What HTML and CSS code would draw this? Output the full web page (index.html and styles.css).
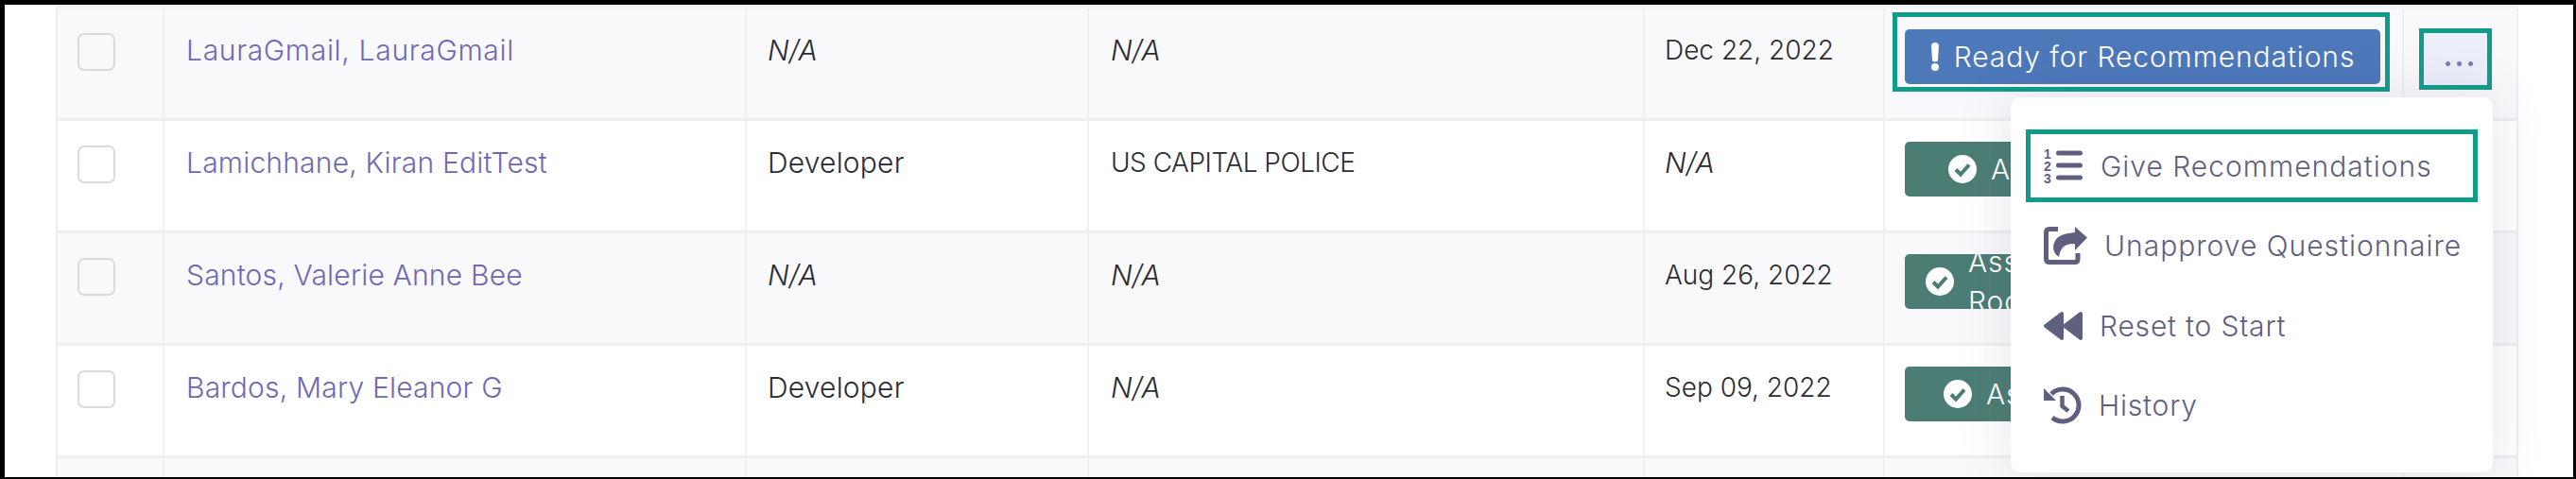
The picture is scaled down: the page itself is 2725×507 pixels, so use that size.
FILE: index.html
```html
<!DOCTYPE html>
<html>
<head lang="en">
    <meta charset="UTF-8">
    <title>Questionnaires</title>
    <link rel="stylesheet" href="styles.css">
</head>
<body>
<div class="frame">
    <div class="table">
        <div class="row">
            <div class="cell"><span class="check"></span></div>
            <div class="cell"><a class="name first">LauraGmail, LauraGmail</a></div>
            <div class="cell"><em class="na">N/A</em></div>
            <div class="cell"><em class="na">N/A</em></div>
            <div class="cell">Dec 22, 2022</div>
            <div class="cell">
                <div class="status ready flagged">
                    <svg class="bang" viewBox="0 0 10 30"><path d="M1 3.500C1 1.500 2.500 0 5 0s4 1.500 4 3.500L8 18.500C7.900 19.800 6.800 20.500 5 20.500s-2.900-.7-3-2z"/><circle cx="5" cy="26" r="4"/></svg>
                    <span>Ready for Recommendations</span>
                </div>
            </div>
            <div class="cell"><div class="more"><i></i><i></i><i></i></div></div>
        </div>
        <div class="row">
            <div class="cell"><span class="check"></span></div>
            <div class="cell"><a class="name">Lamichhane, Kiran EditTest</a></div>
            <div class="cell"><span class="role">Developer</span></div>
            <div class="cell"><span class="org">US CAPITAL POLICE</span></div>
            <div class="cell"><em class="na">N/A</em></div>
            <div class="cell">
                <div class="status done">
                    <svg class="tick" viewBox="0 0 30 30"><circle cx="15" cy="15" r="15" fill="#fff"/><path d="M8 15.500l5 5 9-10" fill="none" stroke="#4c7d74" stroke-width="4"/></svg>
                    <span>Assessment Approved</span>
                </div>
            </div>
            <div class="cell"></div>
        </div>
        <div class="row">
            <div class="cell"><span class="check"></span></div>
            <div class="cell"><a class="name">Santos, Valerie Anne Bee</a></div>
            <div class="cell"><em class="na">N/A</em></div>
            <div class="cell"><em class="na">N/A</em></div>
            <div class="cell">Aug 26, 2022</div>
            <div class="cell">
                <div class="status done two-line">
                    <svg class="tick" viewBox="0 0 30 30"><circle cx="15" cy="15" r="15" fill="#fff"/><path d="M8 15.500l5 5 9-10" fill="none" stroke="#4c7d74" stroke-width="4"/></svg>
                    <span>Assessment Approved,<br>Room Assigned</span>
                </div>
            </div>
            <div class="cell"></div>
        </div>
        <div class="row">
            <div class="cell"><span class="check"></span></div>
            <div class="cell"><a class="name">Bardos, Mary Eleanor G</a></div>
            <div class="cell"><span class="role">Developer</span></div>
            <div class="cell"><em class="na">N/A</em></div>
            <div class="cell">Sep 09, 2022</div>
            <div class="cell">
                <div class="status done shift">
                    <svg class="tick" viewBox="0 0 30 30"><circle cx="15" cy="15" r="15" fill="#fff"/><path d="M8 15.500l5 5 9-10" fill="none" stroke="#4c7d74" stroke-width="4"/></svg>
                    <span>Assessment Approved</span>
                </div>
            </div>
            <div class="cell"></div>
        </div>
        <div class="row">
            <div class="cell"></div><div class="cell"></div><div class="cell"></div><div class="cell"></div>
            <div class="cell"></div><div class="cell"></div><div class="cell"></div>
        </div>
    </div>

    <div class="menu">
        <div class="item current">
            <svg class="ic-list" viewBox="0 0 42 38">
                <text class="digit" x="0" y="11">1</text>
                <text class="digit" x="0" y="24">2</text>
                <text class="digit" x="0" y="37">3</text>
                <rect x="13" y="2.500" width="28" height="5" rx="2.500"/>
                <rect x="13" y="15.500" width="28" height="5" rx="2.500"/>
                <rect x="13" y="28.500" width="28" height="5" rx="2.500"/>
            </svg>
            <span class="lbl-give">Give Recommendations</span>
        </div>
        <div class="item">
            <svg class="ic-share" viewBox="0 0 46 40">
                <path d="M33 0L46 11.500 33 25V18C24 18 18 20 16 32 10 28 9 22 11 17 14 9 22 7 33 6z"/>
                <path class="line" d="M15 2.500H6Q2.500 2.500 2.500 6V34Q2.500 37.500 6 37.500H33Q36 37.500 36 34V28"/>
            </svg>
            <span class="lbl-unapprove">Unapprove Questionnaire</span>
        </div>
        <div class="item">
            <svg class="ic-back" viewBox="0 0 41 30">
                <path class="solid" d="M2 15L19 2V28zM22 15L39 2V28z"/>
            </svg>
            <span class="lbl-reset">Reset to Start</span>
        </div>
        <div class="item">
            <svg class="ic-history" viewBox="0 0 40 40">
                <path class="line" d="M8 8A17 17 0 1 1 9 33"/>
                <path d="M0 2L13 15H0z"/>
                <path class="hand" d="M19.500 10V21L26 26"/>
            </svg>
            <span class="lbl-history">History</span>
        </div>
    </div>
</div>
</body>
</html>
```

FILE: styles.css
```css
*{
    margin: 0;
    padding: 0;
    box-sizing: border-box;
}
html,body{
    width: 100%;
    height: 100%;
    overflow: hidden;
    background: #fff;
}
.frame{
    position: relative;
    width: 2725px;
    height: 507px;
    overflow: hidden;
    border-style: solid;
    border-color: #000;
    border-width: 5px 3px 2px 5px;
    padding-left: 54px;
    font-family: "Inter", "Liberation Sans", sans-serif;
    font-size: 28px;
    font-weight: 300;
    color: #2b2b33;
}
.table{
    width: 2605px;
    border-top: 4px solid #f3f3f7;
}
.row{
    display: grid;
    grid-template-columns: 115px 616px 362px 588px 254px 549px 121px;
    height: 119px;
    border-bottom: 3px solid #eeeef3;
}
.row:nth-child(odd){
    background: #f9f9fb;
}
.cell{
    border-right: 2px solid #eeeef3;
    padding: 23px 23px 0;
    line-height: 42px;
    white-space: nowrap;
}
.cell:first-child{
    border-left: 2px solid #eeeef3;
    padding: 26px 0 0 21px;
}
.cell:nth-child(3){
    padding-left: 22px;
}
.cell:nth-child(5){
    padding-left: 21px;
}
.cell:nth-child(6){
    padding: 22px 0 0 21px;
}
.cell:last-child{
    padding: 21px 0 0 16px;
}
.check{
    display: block;
    width: 40px;
    height: 40px;
    background: #fff;
    border: 2px solid #d9dae0;
    border-radius: 7px;
}
.row:nth-child(odd) .check{
    background: #f9f9fb;
}
.name{
    color: #6f68b4;
    font-size: 30px;
    letter-spacing: .2px;
}
.name.first{
    letter-spacing: .7px;
}
.na{
    font-size: 30px;
}
.role{
    font-size: 30px;
    letter-spacing: .2px;
}
.org{
    letter-spacing: -.5px;
}
.status{
    display: flex;
    align-items: center;
    justify-content: center;
    gap: 15px;
    width: 503px;
    height: 58px;
    border-radius: 5px;
    color: #fff;
    font-size: 30px;
    letter-spacing: .9px;
}
.ready{
    background: #4d78ba;
}
.done{
    background: #4c7d74;
    justify-content: flex-start;
    padding-left: 46px;
    overflow: hidden;
}
.two-line{
    padding-left: 22px;
}
.shift{
    padding-left: 41px;
}
.flagged{
    position: relative;
}
.flagged::after{
    content: "";
    position: absolute;
    top: -18px;
    right: -10px;
    bottom: -8px;
    left: -13px;
    border: 5px solid #0f9d8a;
}
.bang{
    width: 10px;
    height: 30px;
    fill: #fff;
}
.tick{
    flex: none;
    width: 30px;
    height: 30px;
}
.more{
    display: flex;
    align-items: center;
    justify-content: center;
    gap: 7px;
    width: 77px;
    height: 65px;
    padding: 10px 0 0 7px;
    background: #eceefb;
    border: 5px solid #0f9d8a;
}
.more i{
    width: 5px;
    height: 5px;
    border-radius: 50%;
    background: #7d78cc;
}
.menu{
    position: absolute;
    left: 2122px;
    top: 98px;
    width: 510px;
    height: 397px;
    padding: 34px 16px 0;
    display: flex;
    flex-direction: column;
    gap: 7.500px;
    background: #fff;
    border-radius: 10px;
    box-shadow: 0 0 60px rgba(70, 70, 110, .14);
    color: #5f6080;
    font-size: 30px;
}
.item{
    display: flex;
    align-items: center;
    gap: 18px;
    height: 77px;
    padding-left: 14px;
    border: 5px solid transparent;
    white-space: nowrap;
}
.item.current{
    border-color: #0f9d8a;
}
.item svg{
    flex: none;
    fill: #5f6080;
    overflow: visible;
}
.lbl-give{
    letter-spacing: 1px;
}
.lbl-unapprove{
    letter-spacing: 1px;
}
.lbl-reset{
    letter-spacing: .8px;
}
.lbl-history{
    letter-spacing: .8px;
}
.ic-list{
    width: 42px;
    height: 38px;
}
.digit{
    font-family: "Liberation Sans", sans-serif;
    font-size: 14px;
    font-weight: 700;
}
.ic-share{
    width: 46px;
    height: 40px;
}
.ic-back{
    width: 41px;
    height: 30px;
}
.ic-history{
    width: 40px;
    height: 40px;
}
.line{
    fill: none;
    stroke: #5f6080;
    stroke-width: 5;
}
.solid{
    stroke: #5f6080;
    stroke-width: 4;
    stroke-linejoin: round;
}
.item .hand{
    fill: none;
    stroke: #5f6080;
    stroke-width: 4.500;
}
```
